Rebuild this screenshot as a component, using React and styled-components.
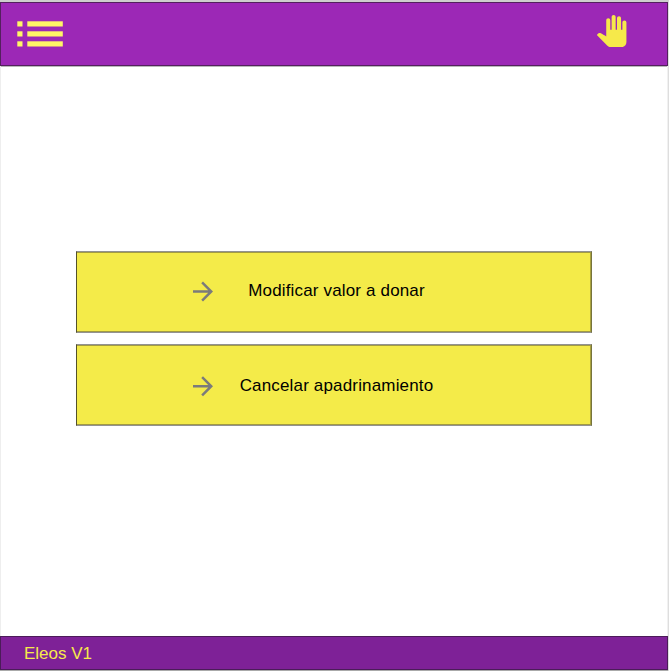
import React from 'react';
import styled, { createGlobalStyle } from 'styled-components';

const GlobalStyle = createGlobalStyle`
  * { box-sizing: border-box; }
  body { margin: 0; background: #fff; }
`;

const Screen = styled.div`
  display: flex;
  flex-direction: column;
  width: 669px;
  height: 671px;
  border-top: 2px solid #cecece;
  border-right: 1px solid #dedede;
  overflow: hidden;
  font-family: "Liberation Sans", Arial, sans-serif;
  font-size: 17px;
`;

const Header = styled.header`
  display: flex;
  justify-content: space-between;
  align-items: flex-start;
  flex: none;
  height: 64px;
  padding: 11.6px 39.4px 0 16px;
  background: #9c28b6;
  border: 1px solid #54205f;
  box-shadow: 0 1px 0 #b9b9b9;
`;

const IconButton = styled.button`
  display: flex;
  padding: 0;
  margin-top: ${({ $drop }) => $drop || 0}px;
  border: 0;
  background: none;
  color: ${({ $tint }) => $tint};
`;

const Content = styled.main`
  display: flex;
  flex: 1;
  flex-direction: column;
  gap: 11px;
  padding: 185px 76px 0 75px;
  border-left: 1px solid #eee;
  border-right: 1px solid #f1f1f1;
`;

const Option = styled.button`
  display: flex;
  align-items: flex-start;
  flex: none;
  width: 516px;
  height: 82px;
  padding: ${({ $top }) => $top}px 0 0 111px;
  border: 1px solid #929292;
  border-left-color: #54522a;
  border-right-color: #77743d;
  box-shadow: inset 0 1px #a29b42, inset 0 -1px #a29b42, inset -1px 0 #aaa33e;
  background: #f4eb49;
  color: #000;
  font: inherit;
`;

const ArrowIcon = styled.svg`
  display: block;
  flex: none;
  width: 30px;
  height: 30px;
  fill: #7b7b7b;
`;

const Label = styled.span`
  flex: none;
  width: 237px;
  margin-top: 5px;
  text-align: center;
  line-height: 20px;
  letter-spacing: 0.16px;
`;

const Footer = styled.footer`
  flex: none;
  height: 34px;
  padding: 1px 0 0 23px;
  background: #7e2197;
  border: 1px solid #4b1c59;
  box-shadow: 0 1px #aaa;
  margin-bottom: 1px;
  color: #f6e94b;
  line-height: 32px;
`;

function Arrow({ shift }) {
  return (
    <ArrowIcon viewBox="0 0 30 30" aria-hidden="true">
      <path
        transform={`translate(0 ${shift}) scale(1.25)`}
        d="M12 4l-1.41 1.41L16.17 11H4v2h12.17l-5.58 5.59L12 20l8-8z"
      />
    </ArrowIcon>
  );
}

function ListIcon() {
  return (
    <svg width="46" height="26" viewBox="0 0 46 26" fill="currentColor">
      {[0.3, 10.3, 20.3].map((y) => (
        <g key={y}>
          <rect x="0.3" y={y} width="5.2" height="5.2" />
          <rect x="10.3" y={y} width="35.5" height="5.2" />
        </g>
      ))}
    </svg>
  );
}

function HandIcon() {
  return (
    <svg width="32.3" height="32.3" viewBox="-0.35 0 24 24" fill="currentColor">
      <path d="M23 5.5V20c0 2.2-1.8 4-4 4h-7.3c-1.08 0-2.1-.43-2.85-1.19L1 14.83s1.26-1.23 1.3-1.25c.22-.19.49-.29.79-.29.22 0 .42.06.6.16.04.01 4.31 2.46 4.31 2.46V4c0-.83.67-1.5 1.5-1.5S11 3.17 11 4v7h1V1.5c0-.83.67-1.5 1.5-1.5S15 .67 15 1.5V11h1V2.5c0-.83.67-1.5 1.5-1.5s1.5.67 1.5 1.5V11h1V5.5c0-.83.67-1.5 1.5-1.5s1.5.67 1.5 1.5z" />
    </svg>
  );
}

export default function App() {
  return (
    <>
      <GlobalStyle />
      <Screen>
        <Header>
          <IconButton $tint="#fff666" $drop={6.4} aria-label="Menú">
            <ListIcon />
          </IconButton>
          <IconButton $tint="#f6e94a" aria-label="Mano">
            <HandIcon />
          </IconButton>
        </Header>
        <Content>
          <Option $top={24}>
            <Arrow shift={0.6} />
            <Label>Modificar valor a donar</Label>
          </Option>
          <Option $top={26}>
            <Arrow shift={0.3} />
            <Label>Cancelar apadrinamiento</Label>
          </Option>
        </Content>
        <Footer>Eleos V1</Footer>
      </Screen>
    </>
  );
}
